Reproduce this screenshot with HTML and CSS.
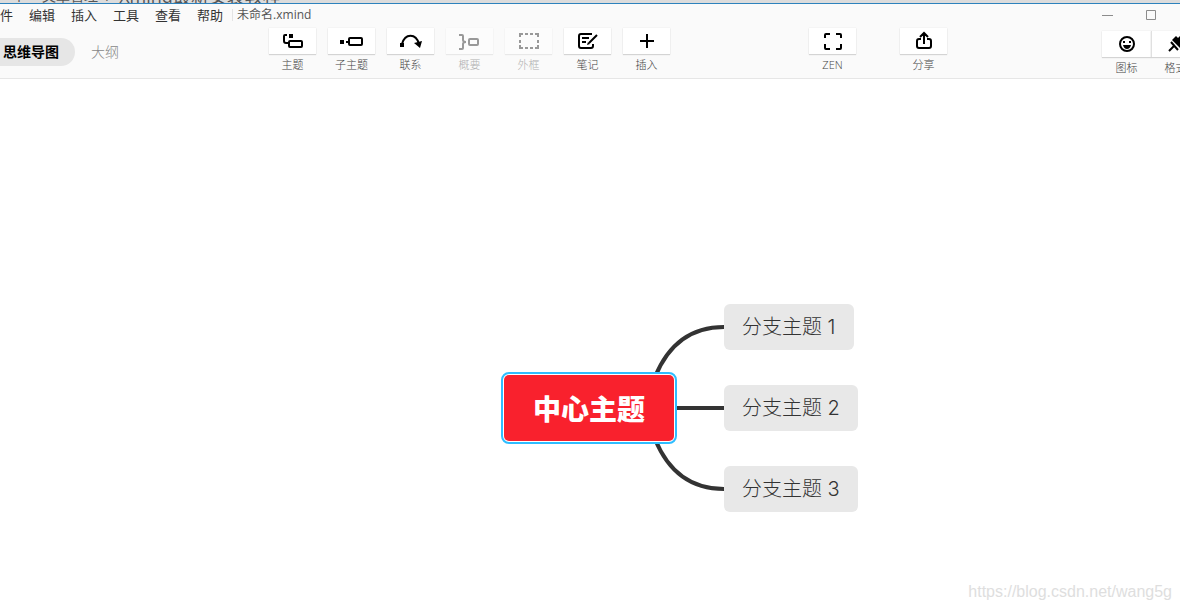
FILE: index.html
```html
<!DOCTYPE html>
<html lang="zh-CN">
<head>
<meta charset="utf-8">
<meta name="viewport" content="width=device-width, initial-scale=1">
<title>未命名.xmind</title>
<link rel="stylesheet" href="styles.css">
</head>
<body>
<div class="behind" aria-hidden="true"><span class="behind-mark">个</span><span class="behind-crumb">文章管理</span><span>/</span><span class="behind-title">Xmind最新安装教程</span></div>
<header class="header">
  <div class="titlebar">
    <nav class="menu">
      <button class="menu-item">文件</button>
      <button class="menu-item">编辑</button>
      <button class="menu-item">插入</button>
      <button class="menu-item">工具</button>
      <button class="menu-item">查看</button>
      <button class="menu-item">帮助</button>
    </nav>
    <span class="filename">未命名.xmind</span>
    <div class="window-controls">
      <button class="win-button" aria-label="最小化"><svg width="12" height="12" viewBox="0 0 12 12"><path d="M1 6.500H12" stroke="#8c8c8c"/></svg></button>
      <button class="win-button" aria-label="最大化"><svg width="12" height="12" viewBox="0 0 12 12"><path d="M1.500 1.500h9v9h-9z" stroke="#8c8c8c" fill="none"/></svg></button>
    </div>
  </div>
  <div class="toolbar">
    <div class="views">
      <button class="view view-active">思维导图</button>
      <button class="view">大纲</button>
    </div>
    <div class="tools">
      <button class="tool"><span class="tool-face"><svg class="icon" viewBox="0 0 24 24"><path d="M6 6H4q-1 0-1 1v5q0 2 2 2h2"/><rect x="8" y="12" width="13" height="6" rx="1"/><path d="M8 5h4v4H8z" class="solid"/></svg></span><span class="tool-label">主题</span></button>
      <button class="tool"><span class="tool-face"><svg class="icon" viewBox="0 0 24 24"><rect x="9" y="9" width="13" height="7" rx="1"/><path d="M0 11h4v4H0z" class="solid"/><path d="M6 13h3"/></svg></span><span class="tool-label">子主题</span></button>
      <button class="tool"><span class="tool-face"><svg class="icon" viewBox="0 0 24 24"><path d="M3 15C6 4 17 4 20 15"/><path d="M1 14h4v4H1zM15 14l8-2-2 7z" class="solid"/></svg></span><span class="tool-label">联系</span></button>
      <button class="tool" disabled><span class="tool-face"><svg class="icon" viewBox="0 0 24 24"><path d="M1 6h3q1 0 1 1v4q0 2 3 2-3 0-3 2v4q0 1-1 1H1"/><rect x="11" y="10" width="9" height="6" rx="1"/></svg></span><span class="tool-label">概要</span></button>
      <button class="tool" disabled><span class="tool-face"><svg class="icon" viewBox="0 0 24 24"><path d="M3 8V5h3M8 5h3M13 5h3M18 5h3v3M21 11v3M21 16v3h-3M16 19h-3M11 19H8M6 19H3v-3M3 14v-3"/></svg></span><span class="tool-label">外框</span></button>
      <button class="tool"><span class="tool-face"><svg class="icon" viewBox="0 0 24 24"><path d="M16 5H5q-2 0-2 2v10q0 2 2 2h10q2 0 2-2v-2M6 9h7M6 13h4M13 14l8-8"/><path d="M11 16l1-3 2 2z" class="solid"/></svg></span><span class="tool-label">笔记</span></button>
      <button class="tool"><span class="tool-face"><svg class="icon" viewBox="0 0 24 24"><path d="M12 5v14M5 12h14"/></svg></span><span class="tool-label">插入</span></button>
    </div>
    <div class="tools tools-share">
      <button class="tool"><span class="tool-face"><svg class="icon" viewBox="0 0 24 24"><path d="M4 9V6q0-1 1-1h4M15 5h4q1 0 1 1v3M20 15v4q0 1-1 1h-4M9 20H5q-1 0-1-1v-4"/></svg></span><span class="tool-label">ZEN</span></button>
      <button class="tool"><span class="tool-face"><svg class="icon" viewBox="0 0 24 24"><path d="M9 10H7q-2 0-2 2v5q0 2 2 2h10q2 0 2-2v-5q0-2-2-2h-2M12 15V4M8 8l4-4 4 4"/></svg></span><span class="tool-label">分享</span></button>
    </div>
    <div class="tools tools-panel">
      <button class="tool"><span class="tool-face"><svg class="icon" viewBox="0 0 24 24"><circle cx="12" cy="12" r="7"/><path d="M8 9h2v2H8zM14 9h2v2h-2zM8 13h8q-1 4-4 4t-4-4z" class="solid"/></svg></span><span class="tool-label">图标</span></button>
      <button class="tool"><span class="tool-face"><svg class="icon" viewBox="0 0 24 24"><path d="M8 8l4-4 2 2 3-3 5 5-6 8z" class="solid"/><path d="M5 19l6-6M7 10l7 8"/></svg></span><span class="tool-label">格式</span></button>
    </div>
  </div>
</header>
<main class="canvas">
  <svg class="links" width="900" height="480" viewBox="0 0 900 480" aria-hidden="true">
    <path d="M655 298C668 266 691 248 724 248M670 329H724M655 360C668 392 691 410 724 410"/>
  </svg>
  <div class="node node-central">中心主题</div>
  <div class="node node-branch branch-1">分支主题 1</div>
  <div class="node node-branch branch-2">分支主题 2</div>
  <div class="node node-branch branch-3">分支主题 3</div>
  <span class="watermark">https://blog.csdn.net/wang5g</span>
</main>
</body>
</html>
```
FILE: styles.css
```css
* {
  box-sizing: border-box;
}

body {
  display: flex;
  flex-direction: column;
  min-height: 100vh;
  margin: 0;
  overflow: hidden;
  background: #fff;
  color: #333;
  font-family: "Open Sans", "Noto Sans CJK SC", sans-serif;
  font-size: 13px;
}

button {
  padding: 0;
  border: 0;
  background: none;
  color: inherit;
  font: inherit;
  white-space: nowrap;
}

.behind {
  display: flex;
  align-items: flex-end;
  gap: 8px;
  height: 3px;
  padding-left: 12px;
  overflow: hidden;
  background: #dcdcdc;
  color: #555;
  font-size: 14px;
  line-height: 14px;
}

.behind-mark {
  margin-right: 8px;
}

.behind-title {
  font-size: 18px;
}

.header {
  flex: none;
  border-top: 1px solid #2d82bd;
  border-bottom: 1px solid #e6e6e6;
  background: #fafafa;
}

.titlebar {
  display: flex;
  align-items: center;
  height: 22px;
}

.menu {
  display: flex;
  gap: 16px;
  margin-left: -13px;
  font-family: "Noto Sans CJK SC", sans-serif;
}

.menu-item {
  line-height: 20px;
}

.filename {
  margin-left: 9px;
  padding-left: 4px;
  border-left: 1px solid #e4e4e4;
  color: #555;
  font-size: 12px;
  line-height: 12px;
}

.window-controls {
  display: flex;
  gap: 32px;
  margin-left: auto;
  padding-right: 23px;
}

.win-button {
  display: flex;
}

.toolbar {
  display: flex;
  align-items: flex-start;
  height: 52px;
  padding-top: 2px;
}

.views {
  display: flex;
  flex: none;
  align-items: center;
  gap: 16px;
  width: 269px;
  margin-top: 10px;
  font-family: "Noto Sans CJK SC", sans-serif;
  font-size: 14px;
}

.view {
  height: 28px;
  padding-bottom: 2px;
  color: #888;
  font-weight: 300;
}

.view-active {
  padding: 0 16px 2px 3px;
  border-radius: 0 14px 14px 0;
  background: #e6e6e6;
  color: #000;
  font-weight: 700;
}

.tools {
  display: flex;
  flex: none;
  gap: 12px;
}

.tools-share {
  gap: 44px;
  margin-left: 139px;
}

.tools-panel {
  gap: 0;
  margin: 3px -20px 0 auto;
}

.tool {
  display: flex;
  flex-direction: column;
  align-items: center;
  width: 47px;
}

.tool-face {
  display: flex;
  align-items: center;
  justify-content: center;
  width: 100%;
  height: 26px;
  background: #fff;
  box-shadow: 0 1px 1px #d4d4d4, 0 0 1px #ddd;
}

.tools-panel .tool {
  width: 49px;
}

.tools-panel .tool + .tool .tool-face {
  border-left: 1px solid #e0e0e0;
}

.tool-label {
  margin-top: 3px;
  color: #444;
  font-size: 11px;
  font-weight: 300;
  line-height: 16px;
}

.tool:disabled .tool-face {
  background: #fcfcfc;
  box-shadow: 0 1px 1px #e8e8e8, 0 0 1px #eee;
}

.tool:disabled .icon {
  color: #999;
}

.tool:disabled .tool-label {
  color: #b0b0b0;
}

.icon {
  width: 24px;
  height: 24px;
  fill: none;
  stroke: currentColor;
  stroke-width: 2;
  color: #000;
}

.icon .solid {
  fill: currentColor;
  stroke: none;
}

.canvas {
  position: relative;
  flex: 1;
}

.links {
  position: absolute;
  top: 0;
  left: 0;
  fill: none;
  stroke: #333;
  stroke-width: 4;
}

.node {
  position: absolute;
  white-space: nowrap;
}

.node-central {
  top: 296px;
  left: 504px;
  padding: 0 29px;
  border-radius: 5px;
  outline: 2px solid #2ebdff;
  outline-offset: 1px;
  background: #f9212d;
  box-shadow: 0 0 0 1px #fff;
  color: #fff;
  font-family: "Noto Sans CJK SC", sans-serif;
  font-size: 28px;
  font-weight: 900;
  line-height: 66px;
}

.node-branch {
  left: 724px;
  padding: 0 18px;
  border-radius: 6px;
  background: #e8e8e8;
  font-family: Inter, "Noto Sans CJK SC", sans-serif;
  font-size: 20px;
  font-weight: 300;
  line-height: 46px;
}

.branch-1 {
  top: 225px;
}

.branch-2 {
  top: 306px;
}

.branch-3 {
  top: 387px;
}

.watermark {
  position: absolute;
  right: 8px;
  bottom: 8px;
  color: #dedede;
  font-family: "Liberation Sans", sans-serif;
  font-size: 16px;
  line-height: 20px;
}
```
